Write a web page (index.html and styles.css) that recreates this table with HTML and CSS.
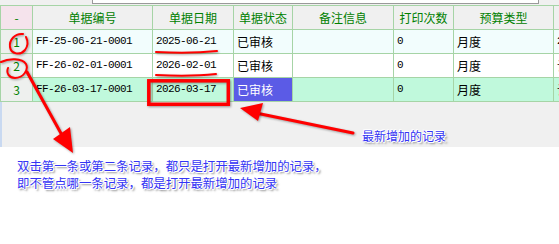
FILE: index.html
```html
<!DOCTYPE html>
<html lang="zh-CN">
<head>
<meta charset="UTF-8"/>
<title>单据列表</title>
<link rel="stylesheet" href="styles.css">
</head>
<body>

<div class="pane">
  <div class="strip"><div class="search-box"></div></div>
  <table class="grid">
    <colgroup>
      <col class="c-no"><col class="c-code"><col class="c-date"><col class="c-state">
      <col class="c-memo"><col class="c-print"><col class="c-type"><col class="c-more">
    </colgroup>
    <thead>
      <tr>
        <th class="corner">-</th>
        <th>单据编号</th>
        <th>单据日期</th>
        <th>单据状态</th>
        <th>备注信息</th>
        <th>打印次数</th>
        <th>预算类型</th>
        <th></th>
      </tr>
    </thead>
    <tbody>
      <tr class="odd">
        <td class="no">1</td>
        <td class="mono">FF-25-06-21-0001</td>
        <td class="mono">2025-06-21</td>
        <td>已审核</td>
        <td></td>
        <td class="mono">0</td>
        <td>月度</td>
        <td class="mono">2025</td>
      </tr>
      <tr>
        <td class="no">2</td>
        <td class="mono">FF-26-02-01-0001</td>
        <td class="mono">2026-02-01</td>
        <td>已审核</td>
        <td></td>
        <td class="mono">0</td>
        <td>月度</td>
        <td>计划</td>
      </tr>
      <tr class="current">
        <td class="no">3</td>
        <td class="mono">FF-26-03-17-0001</td>
        <td class="mono">2026-03-17</td>
        <td class="focus">已审核</td>
        <td></td>
        <td class="mono">0</td>
        <td>月度</td>
        <td>计划</td>
      </tr>
    </tbody>
  </table>
  <div class="pane-foot"></div>
</div>

<p class="note">双击第一条或第二条记录，都只是打开最新增加的记录，<br>即不管点哪一条记录，都是打开最新增加的记录</p>

<!-- hand-drawn marks over the grid -->
<svg class="marks" width="559" height="244" viewBox="0 0 559 244">
  <g class="pen" fill="none" stroke="#f00" stroke-linecap="round" stroke-linejoin="round">
    <path d="M23,34 C15,33 9,40 10,47 C11,54 20,56 25,50 C28,46 28,41 26,37" stroke-width="2"/>
    <path d="M1,62 C9,58 22,58 26,64 C29,70 23,78 15,78 C9,78 6,73 8,68" stroke-width="2"/>
    <path d="M27,72 L63,137" stroke-width="3"/>
    <path d="M156,52 C175,53 198,53 217,51" stroke-width="2"/>
    <path d="M156,75 C175,76 198,76 216,74" stroke-width="2"/>
    <rect x="148.8" y="80.8" width="79.5" height="23.5" stroke-width="3.5" stroke-linecap="butt" stroke-linejoin="miter"/>
    <path d="M256,113 L353,133" stroke-width="3"/>
  </g>
  <g class="pen" fill="#f00">
    <polygon points="53,139 70,127 73,153"/>
    <polygon points="240,108 263,103 258,121"/>
  </g>
</svg>
<span class="tag">最新增加的记录</span>

</body>
</html>
```

FILE: styles.css
```css
body {
  margin: 0; background: #fff;
  width: 559px; height: 244px; overflow: hidden;
  position: relative;
  font-family: "Noto Sans CJK SC", sans-serif; font-size: 12px;
}
.pane {
  background: #f0f0f0; height: 147px;
  display: flex; flex-direction: column;
}
.strip { height: 5px; flex: none; }
.search-box {
  margin-left: 92px; width: 445px; height: 3px;
  background: #fff; border: 1px solid #9a9a9a; border-top: none;
}
.grid {
  border-collapse: collapse; table-layout: fixed;
  width: 643px; flex: none;
}
.c-no { width: 32px; } .c-code { width: 120px; } .c-date { width: 81px; }
.c-state { width: 59px; } .c-memo { width: 101px; } .c-print { width: 60px; }
.c-type { width: 100px; } .c-more { width: 90px; }
.grid th, .grid td {
  border: 1px solid #a6d4a6; height: 23px; padding: 0 0 0 3px;
  white-space: nowrap; overflow: hidden; line-height: 23px;
}
.grid th {
  background: #f0f0f0; color: #008000; font-weight: normal;
  text-align: center; padding: 0;
}
.grid th.corner { background: #f5e3ec; }
.grid td { color: #000; background: #fff; }
.grid tr.odd td { background: #f2fdfd; }
.grid tr.current td { background: #c0f9dc; }
.grid td.no { background: #eef0ee !important; color: #008000; text-align: center; padding: 0; }
.grid tr.current td.focus { background: #5b5be6; color: #fff; }
.mono {
  font-family: "Liberation Mono", monospace; font-size: 11px; letter-spacing: -0.6px;
  color: #000;
}
.pane-foot { flex: 1; border-left: 2px solid #c9d9f1; }

.note {
  margin: 0; padding: 11px 0 0 17px;
  font-size: 12.4px; line-height: 17px;
}
.note, .tag {
  color: #3434f4;
  text-shadow: -1px 0 #fff, 1px 0 #fff, 0 -1px #fff, 0 1px #fff,
    -1px -1px #fff, 1px 1px #fff, 2px 2px 2px #777;
}
.marks { position: absolute; left: 0; top: 0; pointer-events: none; }
.pen { filter: drop-shadow(1px 1px 1px rgba(0,0,0,.35)); }
.tag { position: absolute; left: 362px; top: 127px; line-height: 17px; }
```
